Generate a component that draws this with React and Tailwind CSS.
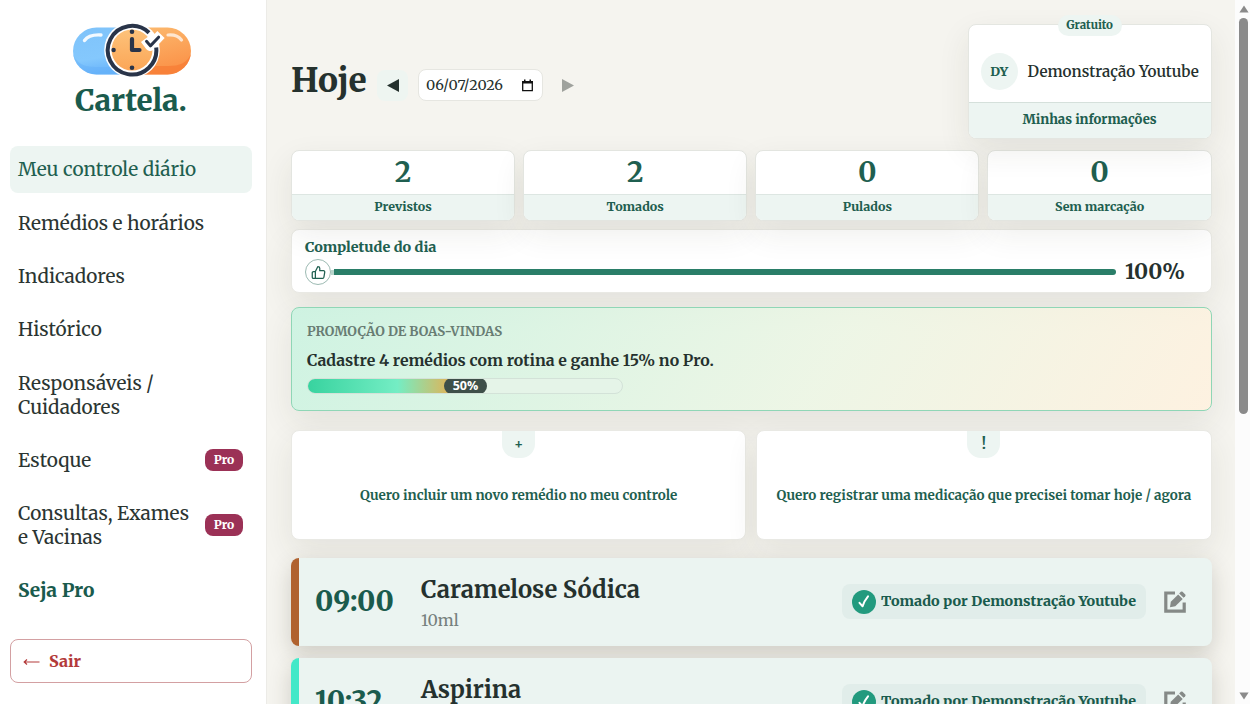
const navItems = [
  { label: 'Meu controle diário', active: true },
  { label: 'Remédios e horários' },
  { label: 'Indicadores' },
  { label: 'Histórico' },
  { label: 'Responsáveis / Cuidadores' },
  { label: 'Estoque', pro: true },
  { label: 'Consultas, Exames e Vacinas', pro: true },
];

const stats = [
  { value: 2, label: 'Previstos' },
  { value: 2, label: 'Tomados' },
  { value: 0, label: 'Pulados' },
  { value: 0, label: 'Sem marcação' },
];

const actions = [
  { icon: '+', label: 'Quero incluir um novo remédio no meu controle' },
  { icon: '!', label: 'Quero registrar uma medicação que precisei tomar hoje / agora' },
];

const doses = [
  { time: '09:00', name: 'Caramelose Sódica', amount: '10ml', bar: 'bg-[#b0622f]' },
  { time: '10:32', name: 'Aspirina', amount: '', bar: 'bg-[#43e8c8]' },
];

const cardShadow = 'shadow-[0_12px_32px_rgba(60,55,35,0.09)]';

function Logo() {
  return (
    <svg className="ml-[2px] h-[56px] w-[122px]" viewBox="0 0 122 56" fill="none">
      <defs>
        <linearGradient id="blue" x1="0" y1="0" x2="0.2" y2="1">
          <stop offset="0" stopColor="#7fc3fa" />
          <stop offset="0.7" stopColor="#84c8fd" />
          <stop offset="1" stopColor="#69b4fa" />
        </linearGradient>
        <linearGradient id="orange" x1="0" y1="0" x2="0.3" y2="1">
          <stop offset="0" stopColor="#fcbb70" />
          <stop offset="1" stopColor="#fb9248" />
        </linearGradient>
        <linearGradient id="face" x1="0" y1="0" x2="0" y2="1">
          <stop offset="0" stopColor="#fdc27a" />
          <stop offset="1" stopColor="#fba657" />
        </linearGradient>
        <clipPath id="pill">
          <rect x="2" y="5.5" width="118" height="47" rx="23.5" />
        </clipPath>
      </defs>
      <g clipPath="url(#pill)">
        <rect x="2" y="5" width="60" height="48" fill="url(#blue)" />
        <rect x="61" y="5" width="60" height="48" fill="url(#orange)" />
        <path d="M2 32C5 41 13 45 24 45H50V53H2Z" fill="#63aff8" opacity="0.45" />
        <path d="M120 32C116 41 108 44 98 44H70V53H120Z" fill="#f77b33" opacity="0.7" />
      </g>
      <path d="M13.5 18.5C17 13.5 22 12.5 30 13" stroke="#fff" strokeWidth="3.4" strokeLinecap="round" opacity="0.9" />
      <path d="M97 13C103 12.5 107.5 14 110.5 18" stroke="#fff" strokeWidth="3.2" strokeLinecap="round" opacity="0.7" />
      <circle cx="61" cy="28" r="27.8" fill="#fff" />
      <circle cx="61" cy="28" r="20.5" fill="url(#face)" />
      <path d="M74 17L79.2 24L90 12.5" stroke="#fff" strokeWidth="10" strokeLinejoin="round" />
      <path d="M78 10.8A24.3 24.3 0 1 0 85.2 25.5" stroke="#293449" strokeWidth="4" />
      <path d="M75.5 19.3L79.4 23.9L87.6 15.2" stroke="#293449" strokeWidth="3" strokeLinecap="round" strokeLinejoin="round" />
      <path d="M61 17V28H68.5" stroke="#293449" strokeWidth="4.2" strokeLinecap="round" strokeLinejoin="round" />
      <g fill="#293449">
        <circle cx="61" cy="9.7" r="2.3" />
        <circle cx="42.6" cy="28" r="2.2" />
        <circle cx="61" cy="45.7" r="2.3" />
      </g>
    </svg>
  );
}

function ProBadge() {
  return (
    <span className="flex h-[22px] w-[38px] shrink-0 items-center justify-center rounded-[8px] bg-[#9b3156] text-[12px] font-extrabold text-white">
      Pro
    </span>
  );
}

function Sidebar() {
  return (
    <aside className="flex w-[267px] shrink-0 flex-col border-r border-[#ecebe7] bg-white pt-[22px] pr-[14px] pl-[10px]">
      <div className="flex h-[124px] flex-col items-center">
        <Logo />
        <span className="mt-[4px] text-[29.4px] leading-[38px] font-extrabold text-[#1a5b4d]">Cartela.</span>
      </div>

      <nav className="flex flex-col gap-[6px]">
        {navItems.map((item) => (
          <a
            key={item.label}
            className={`flex items-center justify-between rounded-[8px] pt-[11.2px] pr-[9px] pb-[12.2px] pl-[8px] text-[19px] leading-[24px] ${
              item.active ? 'bg-[#edf5f2] text-[#1f5f50]' : 'text-[#2b3532]'
            }`}
          >
            <span className={item.pro ? 'w-[180px]' : 'w-[190px]'}>{item.label}</span>
            {item.pro && <ProBadge />}
          </a>
        ))}
        <a className="pt-[10.6px] pb-[12.8px] pl-[8px] text-[19px] leading-[24px] font-extrabold text-[#1a5b4d]">Seja Pro</a>
      </nav>

      <button className="mt-[24px] flex h-[44px] items-center gap-[9px] rounded-[8px] border border-[#d3a0a2] pl-[12px] text-[16px] font-extrabold text-[#b33a3a]">
        <svg className="h-[10px] w-[17px]" viewBox="0 0 17 10" fill="none" stroke="currentColor">
          <path d="M16.5 6H1.5M4 3.5L1.2 6L4 8.5" strokeWidth="1.2" />
        </svg>
        Sair
      </button>
    </aside>
  );
}

function DayPicker() {
  return (
    <div className="flex items-start pt-[35px]">
      <h1 className="w-[86px] pt-px text-[33.2px] leading-[40px] font-extrabold text-[#25312e]">Hoje</h1>
      <button className="mt-[11px] flex h-[31px] w-[31px] items-center justify-center rounded-[8px] bg-[#eef5f1]">
        <svg className="h-[13px] w-[12px] fill-[#25312e]" viewBox="0 0 12 13">
          <path d="M12 0V13L0 6.5Z" />
        </svg>
      </button>
      <div className="mt-[10px] ml-[10px] flex h-[32px] w-[125px] items-center justify-between rounded-[8px] border border-[#e6e6e1] bg-white pt-px pr-[9px] pl-[7px] text-[14.3px] text-[#25312e]">
        06/07/2026
        <svg className="h-[13px] w-[11px]" viewBox="0 0 11 13" fill="none">
          <path d="M0.7 2.7H10.3V11.6H0.7Z" stroke="#111" strokeWidth="1.3" />
          <path d="M0.2 2H10.8V4.4H0.2ZM2 0.6H3.5V3H2ZM7.5 0.6H9V3H7.5Z" fill="#111" />
        </svg>
      </div>
      <svg className="mt-[20px] ml-[19px] h-[13px] w-[12px] fill-[#9fa29d]" viewBox="0 0 12 13">
        <path d="M0 0V13L12 6.5Z" />
      </svg>
    </div>
  );
}

function UserCard() {
  return (
    <div className={`relative h-[115px] w-[244px] rounded-[8px] border border-[#e4e6e1] bg-white ${cardShadow}`}>
      <span className="absolute -top-[10px] left-[89px] flex h-[21px] w-[64px] items-center justify-center rounded-full bg-[#edf5f2] text-[11.4px] font-extrabold text-[#1f5f50]">
        Gratuito
      </span>
      <div className="flex h-[77px] items-center gap-[10px] pt-[16px] pl-[12px]">
        <span className="flex h-[37px] w-[37px] items-center justify-center rounded-full bg-[#edf5f2] text-[12.8px] font-extrabold text-[#1f5f50]">
          DY
        </span>
        <span className="pt-[2px] text-[15.2px] font-semibold whitespace-nowrap text-[#25312e]">Demonstração Youtube</span>
      </div>
      <div className="flex h-[36px] items-center justify-center rounded-b-[7px] border-t border-[#d5e0db] bg-[#edf5f2] pb-px text-[13px] font-extrabold text-[#1f5f50]">
        Minhas informações
      </div>
    </div>
  );
}

function Stat({ value, label }) {
  return (
    <div className={`h-[71px] overflow-hidden rounded-[8px] border border-[#e3e5e0] bg-white text-center ${cardShadow}`}>
      <div className="h-[43px] text-[28px] leading-[43px] font-bold text-[#1f5f50]">{value}</div>
      <div className="h-[26px] border-t border-[#dde6e2] bg-[#edf5f2] text-[12.4px] leading-[24px] font-extrabold text-[#1f5f50]">
        {label}
      </div>
    </div>
  );
}

function Completion() {
  return (
    <section className={`mt-[8px] h-[64px] rounded-[8px] border border-[#e9e9e4] bg-white pt-[7px] pl-[13px] ${cardShadow}`}>
      <h2 className="text-[14.3px] leading-[20px] font-extrabold text-[#1f5f50]">Completude do dia</h2>
      <div className="mt-[2px] flex h-[26px] items-center">
        <span className="flex h-[26px] w-[26px] items-center justify-center rounded-full border border-[#9cbab2] bg-white">
          <svg className="h-[15px] w-[15px]" viewBox="0 0 24 24" fill="none" stroke="#1f5f50" strokeWidth="2" strokeLinejoin="round" strokeLinecap="round">
            <path d="M7 10.5V21.5M7 10.5L11 2.5C12.8 2.5 14 3.7 14 5.3V9H20A2 2 0 0 1 22 11.3L20.6 19.7A2 2 0 0 1 18.6 21.5H4A2 2 0 0 1 2 19.5V12.5A2 2 0 0 1 4 10.5Z" />
          </svg>
        </span>
        <span className="h-[5px] w-[3px] bg-[#b9d5cc]" />
        <span className="h-[6px] w-[782px] rounded-r-full bg-[#2a7e68]" />
        <span className="ml-[9px] text-[21.4px] font-bold text-[#25312e]">100%</span>
      </div>
    </section>
  );
}

function Promo() {
  return (
    <section className={`mt-[14px] h-[104px] rounded-[8px] border border-[#8fd6b6] bg-[linear-gradient(120deg,rgba(200,243,224,0.85),rgba(236,246,228,0.85)_58%,rgba(255,241,222,0.85))] pt-[14px] pl-[15px] ${cardShadow}`}>
      <p className="text-[13.1px] leading-[20px] font-bold text-[#687c73]">PROMOÇÃO DE BOAS-VINDAS</p>
      <p className="mt-[6px] text-[15.84px] leading-[24px] font-bold text-[#25312e]">
        Cadastre 4 remédios com rotina e ganhe 15% no Pro.
      </p>
      <div className="mt-[6px] flex h-[16px] w-[316px] overflow-hidden rounded-full border border-[#d3e2d8] bg-[#e5f4e8]">
        <div className="-mt-px h-[16px] w-[157px] bg-[linear-gradient(90deg,#38d39f,#74edc4_57%,#d8b860_88%)]" />
        <span className="-mt-px -ml-[21px] h-[16px] w-[43px] rounded-full bg-[#3e4f49] text-center font-['Open_Sans'] text-[12.5px] leading-[16px] font-bold text-white">
          50%
        </span>
      </div>
    </section>
  );
}

function ActionCard({ icon, label }) {
  return (
    <button className={`flex h-[110px] flex-col items-center rounded-[8px] border border-[#e9e9e4] bg-white ${cardShadow}`}>
      <span className="flex h-[27px] w-[33px] items-center justify-center rounded-b-[14px] bg-[#edf5f2] text-[14px] font-extrabold text-[#1f5f50]">
        {icon}
      </span>
      <span className="mt-[28px] text-[13.44px] leading-[20px] font-bold whitespace-nowrap text-[#1f5f50]">{label}</span>
    </button>
  );
}

function DoseCard({ dose }) {
  return (
    <article className="flex h-[88px] shrink-0 items-center overflow-hidden rounded-[8px] bg-[#ebf4f1] pr-[25.5px] shadow-[0_8px_22px_rgba(60,55,35,0.2)]">
      <span className={`h-full w-[8px] ${dose.bar}`} />
      <span className="ml-[16px] w-[106px] text-[27.5px] leading-[34px] font-extrabold text-[#1a5b4d]">{dose.time}</span>
      <div className="flex-1 pt-[2px]">
        <h3 className="text-[23.7px] leading-[32px] font-bold text-[#25312e]">{dose.name}</h3>
        <p className="mt-[2px] h-[24px] text-[16px] leading-[24px] text-[#76807d]">{dose.amount}</p>
      </div>
      <span className="mb-px flex h-[35px] w-[304px] items-center gap-[5px] rounded-[8px] bg-[#e1edea] pl-[10px] text-[14.3px] font-extrabold whitespace-nowrap text-[#1a5b4d]">
        <svg className="h-[24px] w-[24px] shrink-0" viewBox="0 0 24 24" fill="none">
          <circle cx="12" cy="12" r="12" fill="#229a7e" />
          <path d="M7.5 12.8L10.6 16.3C11.6 12.8 13.4 9.4 16 6.3" stroke="#fff" strokeWidth="2" strokeLinecap="round" strokeLinejoin="round" />
        </svg>
        <span className="pt-px">Tomado por Demonstração Youtube</span>
      </span>
      <svg className="ml-[18px] h-[22px] w-[22px] shrink-0" viewBox="0 0 22 22" fill="none">
        <path d="M11 2H1.8V20.2H20.2V11.5" stroke="#858987" strokeWidth="3.2" />
        <path d="M6 16.2L6.8 10.8L14.2 3.4L18.7 7.9L11.3 15.3Z" fill="#858987" />
        <path d="M15.2 2.4L16.8 0.8Q17.7 0 18.6 0.8L21.2 3.4Q22 4.3 21.2 5.2L19.6 6.8Z" fill="#858987" />
      </svg>
    </article>
  );
}

function Scrollbar() {
  return (
    <div className="flex w-[15px] shrink-0 flex-col items-center bg-[#fcfcfc] pt-[5px] pb-[4px] pl-[2px]">
      <svg className="h-[8px] w-[10px] fill-[#8a8a8a]" viewBox="0 0 10 8">
        <path d="M5 0.5L9.6 7.5H0.4Z" />
      </svg>
      <div className="mt-[5px] h-[396px] w-[9px] rounded-full bg-[#8a8a8a]" />
      <svg className="mt-auto h-[8px] w-[10px] fill-[#8a8a8a]" viewBox="0 0 10 8">
        <path d="M5 7.5L9.6 0.5H0.4Z" />
      </svg>
    </div>
  );
}

export default function App() {
  return (
    <div className="flex h-[704px] w-[1250px] overflow-hidden bg-[#f5f4ef] font-[Merriweather,'DejaVu_Serif_Condensed','DejaVu_Serif',serif]">
      <Sidebar />
      <main className="flex-1 overflow-hidden pt-[24px] pr-[23.4px] pl-[24px]">
        <header className="flex justify-between">
          <DayPicker />
          <UserCard />
        </header>

        <section className="mt-[11px] grid grid-cols-4 gap-[8px]">
          {stats.map((s) => (
            <Stat key={s.label} value={s.value} label={s.label} />
          ))}
        </section>

        <Completion />
        <Promo />

        <section className="mt-[18.5px] grid grid-cols-2 gap-[10px]">
          {actions.map((a) => (
            <ActionCard key={a.label} icon={a.icon} label={a.label} />
          ))}
        </section>

        <section className="mt-[18.5px] flex flex-col gap-[12px]">
          {doses.map((d) => (
            <DoseCard key={d.time} dose={d} />
          ))}
        </section>
      </main>
      <Scrollbar />
    </div>
  );
}
